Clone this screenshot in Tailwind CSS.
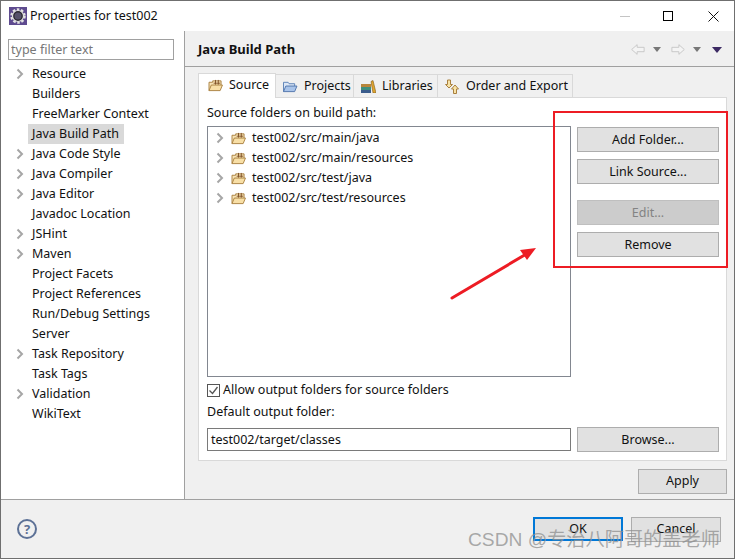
<!DOCTYPE html>
<html lang="en">
<head>
    <meta charset="UTF-8">
    <title>Properties for test002</title>
    <script src="https://cdn.jsdelivr.net/npm/@tailwindcss/browser@4"></script>
</head>
<body class="m-0 overflow-hidden bg-white">
    <svg class="hidden">
        <symbol id="chev" viewBox="0 0 8 12"><path d="M1.500 1.500 6 6l-4.500 4.500" fill="none" stroke="#a6a6a6" stroke-width="2"/></symbol>
        <symbol id="pkg" viewBox="0 0 16 14">
            <path d="M1 12.500V3.500h4V2h9v5" fill="#f7e3b5" stroke="#a9803f"/>
            <path d="M1 12.500 3.500 6.500H15.500L13 12.500Z" fill="#f8dfa6" stroke="#a9803f"/>
            <path d="M6 4.500h7M8 1v5M11 1v5" fill="none" stroke="#7d4f24"/>
        </symbol>
    </svg>
    <div class="relative flex h-[559px] w-[735px] flex-col border border-[#6f6f6f] font-['Noto_Sans','Open_Sans',sans-serif] text-[12.5px] text-[#111]">
        <!-- Title bar -->
        <div class="flex h-[30px] shrink-0 items-center bg-white">
            <svg class="ml-[8px] h-[18px] w-[18px]" viewBox="0 0 18 18">
                <rect width="18" height="18" fill="#5e4b8f"/>
                <circle cx="9" cy="9" r="6.500" fill="none" stroke="#e4e4e4" stroke-width="2.500" stroke-dasharray="2.500 1.600"/>
                <circle cx="9" cy="9" r="5.500" fill="#2c2a33" stroke="#e4e4e4" stroke-width="1.200"/>
                <circle cx="9" cy="9" r="3.500" fill="#55516a"/>
            </svg>
            <span class="ml-[3px]">Properties for test002</span>
            <div class="ml-auto flex items-center">
                <div class="mr-[33px] h-px w-[10px] bg-[#c4c4c4]"></div>
                <div class="mr-[35px] h-[10px] w-[10px] border border-black"></div>
                <svg class="mr-[15px] h-[11px] w-[11px]" viewBox="0 0 11 11"><path d="M.5.500l10 10M10.500.500l-10 10" stroke="#111" fill="none"/></svg>
            </div>
        </div>

        <div class="flex min-h-0 flex-1">
            <!-- Preference tree -->
            <aside class="w-[184px] shrink-0 border-r border-[#a0a0a0] bg-white">
                <input class="ml-[7px] mt-[8px] block h-[21px] w-[166px] border border-[#a0a0a0] px-[2px] pb-[1px] text-[12.5px] leading-none placeholder:text-[#777]" placeholder="type filter text">
                <ul class="mt-[4px] leading-[20px]">
                    <li class="flex h-5 items-center pl-[15px]"><svg class="h-3 w-2"><use href="#chev"/></svg><span class="ml-[8px]">Resource</span></li>
                    <li class="h-5 pl-[31px]">Builders</li>
                    <li class="h-5 pl-[31px]">FreeMarker Context</li>
                    <li class="ml-[27px] h-5 w-[96px] bg-[#d9d9d9] pl-[4px]">Java Build Path</li>
                    <li class="flex h-5 items-center pl-[15px]"><svg class="h-3 w-2"><use href="#chev"/></svg><span class="ml-[8px]">Java Code Style</span></li>
                    <li class="flex h-5 items-center pl-[15px]"><svg class="h-3 w-2"><use href="#chev"/></svg><span class="ml-[8px]">Java Compiler</span></li>
                    <li class="flex h-5 items-center pl-[15px]"><svg class="h-3 w-2"><use href="#chev"/></svg><span class="ml-[8px]">Java Editor</span></li>
                    <li class="h-5 pl-[31px]">Javadoc Location</li>
                    <li class="flex h-5 items-center pl-[15px]"><svg class="h-3 w-2"><use href="#chev"/></svg><span class="ml-[8px]">JSHint</span></li>
                    <li class="flex h-5 items-center pl-[15px]"><svg class="h-3 w-2"><use href="#chev"/></svg><span class="ml-[8px]">Maven</span></li>
                    <li class="h-5 pl-[31px]">Project Facets</li>
                    <li class="h-5 pl-[31px]">Project References</li>
                    <li class="h-5 pl-[31px]">Run/Debug Settings</li>
                    <li class="h-5 pl-[31px]">Server</li>
                    <li class="flex h-5 items-center pl-[15px]"><svg class="h-3 w-2"><use href="#chev"/></svg><span class="ml-[8px]">Task Repository</span></li>
                    <li class="h-5 pl-[31px]">Task Tags</li>
                    <li class="flex h-5 items-center pl-[15px]"><svg class="h-3 w-2"><use href="#chev"/></svg><span class="ml-[8px]">Validation</span></li>
                    <li class="h-5 pl-[31px]">WikiText</li>
                </ul>
            </aside>

            <!-- Page area -->
            <main class="flex min-w-0 flex-1 flex-col bg-[#f0f0f0]">
                <div class="flex h-[36px] shrink-0 items-center border-b border-[#a0a0a0] pl-[13px] pr-[12px] pt-[3px]">
                    <b class="text-[13px] font-bold">Java Build Path</b>
                    <div class="-mt-px ml-auto flex items-center">
                        <svg class="h-[13px] w-[14px]" viewBox="0 0 16 13"><path d="M.8 6.500 7 1v3h8v5H7v3Z" fill="#f4f4f4" stroke="#c4c4c4"/></svg>
                        <div class="ml-[8px] h-0 w-0 border-x-[4px] border-t-[5px] border-x-transparent border-t-[#777]"></div>
                        <svg class="ml-[10px] h-[13px] w-[14px]" viewBox="0 0 16 13"><path d="M15.200 6.500 9 1v3H1v5h8v3Z" fill="#f4f4f4" stroke="#c4c4c4"/></svg>
                        <div class="ml-[8px] h-0 w-0 border-x-[4px] border-t-[5px] border-x-transparent border-t-[#777]"></div>
                        <div class="ml-[11px] h-0 w-0 border-x-[5px] border-t-[6px] border-x-transparent border-t-[#3c2a63]"></div>
                    </div>
                </div>

                <div class="ml-[13px] mt-[6px] flex h-[24px] items-end whitespace-nowrap">
                    <div class="z-10 -mb-px flex h-[25px] w-[78px] items-center border border-b-0 border-[#d9d9d9] bg-white pb-[2px] pl-[9px]">
                        <svg class="h-[13px] w-[15px]"><use href="#pkg"/></svg><span class="ml-[6px]">Source</span>
                    </div>
                    <div class="flex h-[23px] w-[78px] items-center border-r border-t border-[#d9d9d9] pl-[6px]">
                        <svg class="h-[13px] w-[16px]" viewBox="0 0 16 14"><path d="M1 12.500V2.500h5l1 1.500h6v3" fill="#dbe6f5" stroke="#5a7fb5"/><path d="M1 12.500 3.500 6.500h12L13 12.500Z" fill="#a9c4ea" stroke="#4f74ab"/></svg><span class="ml-[6px]">Projects</span>
                    </div>
                    <div class="flex h-[23px] w-[84px] items-center border-r border-t border-[#d9d9d9] pl-[7px]">
                        <svg class="h-[13px] w-[15px]" viewBox="0 0 15 13"><rect x="0" y="4" width="10" height="3" fill="#b8863b"/><rect x="0" y="7" width="10" height="3" fill="#3f8f7d"/><rect x="0" y="10" width="10" height="3" fill="#3a5c8c"/><path d="M10 1.500l2-1 3 12.500h-3Z" fill="#e0a52e" stroke="#7d5a1c" stroke-width=".6"/></svg><span class="ml-[6px]">Libraries</span>
                    </div>
                    <div class="flex h-[23px] w-[135px] items-center border-r border-t border-[#d9d9d9] pl-[7px]">
                        <svg class="h-[15px] w-[15px]" viewBox="0 0 15 15"><path d="M2.500 1h3v4.500H7.500L4 9 .5 5.500h2Z" fill="#f8e3a6" stroke="#a9803f"/><path d="M10.500 14.500h-3V10H5.500L9 6l3.500 4h-2Z" transform="translate(1 0)" fill="#f8e3a6" stroke="#a9803f"/></svg><span class="ml-[6px]">Order and Export</span>
                    </div>
                </div>

                <!-- Source tab -->
                <section class="ml-[13px] mr-[8px] flex h-[364px] w-[529px] flex-col border border-[#d9d9d9] bg-white pl-[8px]">
                    <p class="mt-[5px] h-[23px] leading-[20px]">Source folders on build path:</p>
                    <div class="flex h-[251px] items-start">
                        <ul class="h-[251px] w-[364px] border border-[#828790] pt-[1px] leading-[20px]">
                            <li class="flex h-5 items-center pl-[8px]"><svg class="h-3 w-2"><use href="#chev"/></svg><svg class="ml-[7px] h-[13px] w-[15px]"><use href="#pkg"/></svg><span class="ml-[6px]">test002/src/main/java</span></li>
                            <li class="flex h-5 items-center pl-[8px]"><svg class="h-3 w-2"><use href="#chev"/></svg><svg class="ml-[7px] h-[13px] w-[15px]"><use href="#pkg"/></svg><span class="ml-[6px]">test002/src/main/resources</span></li>
                            <li class="flex h-5 items-center pl-[8px]"><svg class="h-3 w-2"><use href="#chev"/></svg><svg class="ml-[7px] h-[13px] w-[15px]"><use href="#pkg"/></svg><span class="ml-[6px]">test002/src/test/java</span></li>
                            <li class="flex h-5 items-center pl-[8px]"><svg class="h-3 w-2"><use href="#chev"/></svg><svg class="ml-[7px] h-[13px] w-[15px]"><use href="#pkg"/></svg><span class="ml-[6px]">test002/src/test/resources</span></li>
                        </ul>
                        <div class="ml-[6px] flex w-[142px] flex-col pt-[1px]">
                            <button class="h-[25px] border border-[#adadad] bg-[#e1e1e1] pt-px">Add Folder...</button>
                            <button class="mt-[7px] h-[25px] border border-[#adadad] bg-[#e1e1e1] pt-px">Link Source...</button>
                            <button class="mt-[16px] h-[25px] border border-[#bfbfbf] bg-[#cccccc] pt-px text-[#838383]">Edit...</button>
                            <button class="mt-[7px] h-[25px] border border-[#adadad] bg-[#e1e1e1] pt-px">Remove</button>
                        </div>
                    </div>
                    <label class="mt-[5px] flex h-[16px] items-center">
                        <span class="flex h-[13px] w-[13px] items-center justify-center border border-[#555]">
                            <svg class="h-[11px] w-[11px]" viewBox="0 0 11 11"><path d="M1.500 5.500 4.500 8.500 9.500 2" fill="none" stroke="#555" stroke-width="1.300"/></svg>
                        </span>
                        <span class="ml-[3px]">Allow output folders for source folders</span>
                    </label>
                    <p class="mt-[4px] h-[20px] leading-[20px]">Default output folder:</p>
                    <div class="mt-[5px] flex items-center">
                        <div class="flex h-[23px] w-[364px] items-center border border-[#7a7a7a] pl-[3px] pt-px">test002/target/classes</div>
                        <button class="ml-[6px] h-[25px] w-[142px] border border-[#adadad] bg-[#e1e1e1] pt-px">Browse...</button>
                    </div>
                </section>

                <div class="mr-[7px] mt-[8px] flex justify-end">
                    <button class="h-[25px] w-[89px] border border-[#adadad] bg-[#e1e1e1]">Apply</button>
                </div>
            </main>
        </div>

        <!-- Dialog footer -->
        <footer class="flex h-[59px] shrink-0 items-center border-t border-[#a0a0a0] bg-[#f0f0f0] pl-[16px] pr-[13px]">
            <div class="flex h-5 w-5 items-center justify-center rounded-full border-2 border-[#5c7196] text-[13px] font-bold leading-none text-[#5c7196]">?</div>
            <button class="ml-auto h-[24px] w-[90px] border-2 border-[#0078d7] bg-[#e1e1e1]">OK</button>
            <button class="ml-[8px] h-[25px] w-[90px] border border-[#adadad] bg-[#e1e1e1]">Cancel</button>
        </footer>

        <!-- Annotation drawn over the dialog -->
        <div class="absolute left-[552px] top-[110px] h-[157px] w-[175px] border-2 border-[#ed1c24]"></div>
        <svg class="absolute left-[447px] top-[244px] h-[56px] w-[92px]" viewBox="0 0 92 56">
            <path d="M4 53 80 8" stroke="#ed1c24" stroke-width="3" stroke-linecap="round" fill="none"/>
            <path d="M88 3 72 5l7 10Z" fill="#ed1c24"/>
        </svg>
        <div class="absolute left-[467px] top-[527px] whitespace-nowrap font-['Liberation_Sans','Noto_Sans_CJK_SC',sans-serif] text-[19.200px] leading-[24px] text-[#8f8f8f]/75">CSDN @专治八阿哥的盖老师</div>
    </div>
</body>
</html>
